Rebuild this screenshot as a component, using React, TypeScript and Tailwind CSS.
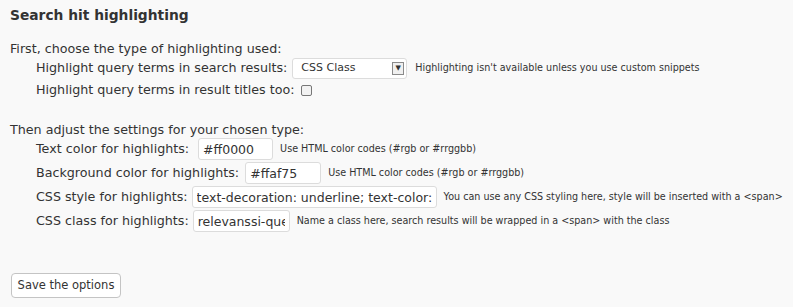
export default function App() {
  const font = { fontFamily: '"DejaVu Sans", Verdana, sans-serif' };
  const rows = [
    { label: 'Text color for highlights:', value: '#ff0000', w: 'w-[75px]', gap: 'ml-[9px]', note: 'Use HTML color codes (#rgb or #rrggbb)' },
    { label: 'Background color for highlights:', value: '#ffaf75', w: 'w-[76px]', gap: 'ml-[6px]', note: 'Use HTML color codes (#rgb or #rrggbb)' },
    { label: 'CSS style for highlights:', value: 'text-decoration: underline; text-color: #ff0000', w: 'w-[245px]', gap: 'ml-[4px]', note: 'You can use any CSS styling here, style will be inserted with a <span>' },
    { label: 'CSS class for highlights:', value: 'relevanssi-query-term', w: 'w-[97px]', gap: 'ml-[4px]', note: 'Name a class here, search results will be wrapped in a <span> with the class' },
  ];
  return (
    <div className="w-[793px] h-[307px] bg-[#f9f9f9] text-[#333] overflow-hidden whitespace-nowrap" style={font}>
      <div className="px-[10px] pt-[5px]">
        <h3 className="text-[13.8px] font-bold leading-[20px] h-[20px]">Search hit highlighting</h3>
        <p className="text-[12.7px] mt-[16px] leading-[16px] h-[16px]">First, choose the type of highlighting used:</p>
        <div className="pl-[26px] text-[12.7px]">
          <div className="flex items-center h-[22px]">
            <span>Highlight query terms in search results:</span>
            <div className="ml-[5px] shrink-0 flex items-center w-[115px] h-[21px] bg-white border border-[#dcdcdc] rounded-[3px] pl-[8px] pr-[2px] text-[11px]">
              <span className="flex-1">CSS Class</span>
              <span className="w-[12px] h-[13px] border border-[#8a8a8a] bg-[#f0f0f0] flex items-center justify-center text-[7px] leading-none">▼</span>
            </div>
            <span className="ml-[8px] text-[9.6px]">Highlighting isn't available unless you use custom snippets</span>
          </div>
          <div className="flex items-center h-[22px]">
            <span>Highlight query terms in result titles too:</span>
            <span className="ml-[6px] w-[11px] h-[11px] border border-[#777] rounded-[2px] bg-[#f2f2f2]" />
          </div>
        </div>
        <p className="text-[12.7px] mt-[22px] leading-[14px] h-[14px]">Then adjust the settings for your chosen type:</p>
        <div className="pl-[26px] text-[12.7px]">
          {rows.map((r) => (
            <div key={r.label} className="flex items-center h-[24px]">
              <span>{r.label}</span>
              <input
                readOnly
                value={r.value}
                className={`${r.w} ${r.gap} shrink-0 h-[22px] bg-white border border-[#dcdcdc] rounded-[3px] px-[4px] text-[12.5px] text-[#333] outline-none`}
                style={font}
              />
              <span className="ml-[7px] text-[9.6px]">{r.note}</span>
            </div>
          ))}
        </div>
        <button
          className="mt-[40px] ml-[1px] h-[25px] w-[110px] bg-white border border-[#c4c4c4] rounded-[4px] text-[11.5px] text-[#333]"
          style={font}
        >
          Save the options
        </button>
      </div>
    </div>
  );
}
